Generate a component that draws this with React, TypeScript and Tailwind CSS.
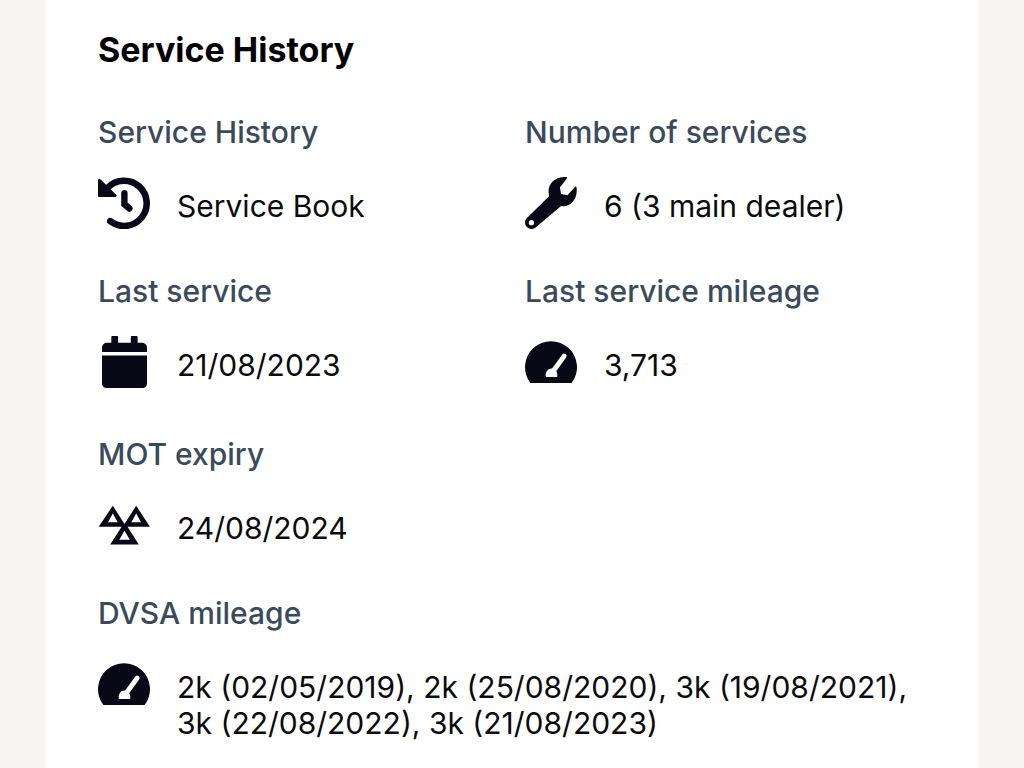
import React from 'react';

interface IconProps {
  children: React.ReactNode;
}

interface HistoryItemProps {
  label: string;
  icon: React.ReactNode;
  children: React.ReactNode;
}

const Icon = ({ children }: IconProps) => (
  <svg viewBox="0 0 52 52" fill="currentColor" aria-hidden="true" className="size-[52px] shrink-0 text-[#080817]">
    {children}
  </svg>
);

const HistoryIcon = () => (
  <Icon>
    <path d="M9.5 11A22.600 22.600 0 1 1 12.200 44.200" fill="none" stroke="currentColor" strokeWidth="6.6" strokeLinecap="round" />
    <path d="M0 3.200c0-1.300 1.500-1.900 2.400-1l15.800 15.600c.9.9.3 2.200-1 2.200H1.300C.6 20 0 19.400 0 18.700z" />
    <path d="M26.400 16.200v11l5 4.300" fill="none" stroke="currentColor" strokeWidth="6.4" strokeLinecap="round" />
  </Icon>
);

const WrenchIcon = () => (
  <Icon>
    <path
      fillRule="evenodd"
      d="M42 1.200 34.900 10.500l1.200 6.500 6.300 1.300 7.800-8.500c.5-.5 1.200-.3 1.300.4 1.700 10.300-4.800 19-13.200 19-.8 0-1.500 0-2.200-.2L11.200 50.100C8.600 52.600 4.400 52.600 1.900 50.100s-2.500-6.600 0-9.100L24.300 19c-.5-1.500-.8-3.100-.8-4.700C23.500 5.500 31.800-1 41.400.1c.7.1 1 .6.600 1.100zM6.400 43.100a2.600 2.600 0 1 0 0 5.200 2.600 2.600 0 0 0 0-5.200z"
    />
  </Icon>
);

const CalendarIcon = () => (
  <Icon>
    <path d="M13.300 1.200c0-.7.500-1.200 1.200-1.200h4.400c.7 0 1.200.5 1.200 1.200v5.600h12.700V1.200c0-.7.500-1.200 1.200-1.200h4.400c.7 0 1.200.5 1.200 1.200v5.600H44a5 5 0 0 1 5 5V16H4v-4.200a5 5 0 0 1 5-5h4.300z" />
    <path d="M4 19.500h45v28a4.500 4.500 0 0 1-4.500 4.500h-36A4.500 4.500 0 0 1 4 47.500z" />
  </Icon>
);

const GaugeIcon = () => (
  <Icon>
    <path d="M5.400 47a26 26 0 1 1 41.200 0z" />
    <path d="M28 35.500 39.200 20" fill="none" stroke="white" strokeWidth="4.8" strokeLinecap="round" />
    <path d="M21.700 41c-.6 0-1-.4-1-1v-.8c0-3.800 2.500-6.700 5.800-6.700 3.400 0 5.800 2.900 5.800 6.700v.8c0 .6-.4 1-1 1z" fill="white" />
  </Icon>
);

const MotIcon = () => (
  <Icon>
    <path
      fillRule="evenodd"
      d="M14.800 6.700 26.500 25 38.200 6.700 51.900 27.800H29.500L40.800 45.500H12.200l11.400-17.700H.7zM14.800 14.600 10 23.200h9.700zM38.200 14.600l-4.900 8.600h9.700zM26.500 31.800l-5.200 9h10.500z"
    />
  </Icon>
);

const HistoryItem = ({ label, icon, children }: HistoryItemProps) => (
  <div>
    <dt className="font-medium text-[#3b4a5b]">{label}</dt>
    <dd className="mt-[27px] flex items-start gap-[27px] text-[#0b0b0d]">
      {icon}
      <span className="pt-[11px]">{children}</span>
    </dd>
  </div>
);

const App = () => (
  <div className="min-h-screen bg-[#f6f5f3] px-[46px] font-['Inter',sans-serif]">
    <main className="min-h-screen bg-white px-[52px] pt-7 pb-6">
      <h2 className="text-[34px] leading-[44px] font-bold text-black">Service History</h2>

      <div className="mt-[42px] flex flex-col gap-12 text-[30px] leading-[36px]">
        <dl className="grid grid-cols-2 gap-x-[26px] gap-y-11">
          <HistoryItem label="Service History" icon={<HistoryIcon />}>
            Service Book
          </HistoryItem>
          <HistoryItem label="Number of services" icon={<WrenchIcon />}>
            6 (3 main dealer)
          </HistoryItem>
          <HistoryItem label="Last service" icon={<CalendarIcon />}>
            21/08/2023
          </HistoryItem>
          <HistoryItem label="Last service mileage" icon={<GaugeIcon />}>
            3,713
          </HistoryItem>
        </dl>

        {/* Full width rows */}
        <dl className="grid gap-y-11">
          <HistoryItem label="MOT expiry" icon={<MotIcon />}>
            24/08/2024
          </HistoryItem>
          <HistoryItem label="DVSA mileage" icon={<GaugeIcon />}>
            2k (02/05/2019), 2k (25/08/2020), 3k (19/08/2021), 3k (22/08/2022), 3k (21/08/2023)
          </HistoryItem>
        </dl>
      </div>
    </main>
  </div>
);

export default App;
